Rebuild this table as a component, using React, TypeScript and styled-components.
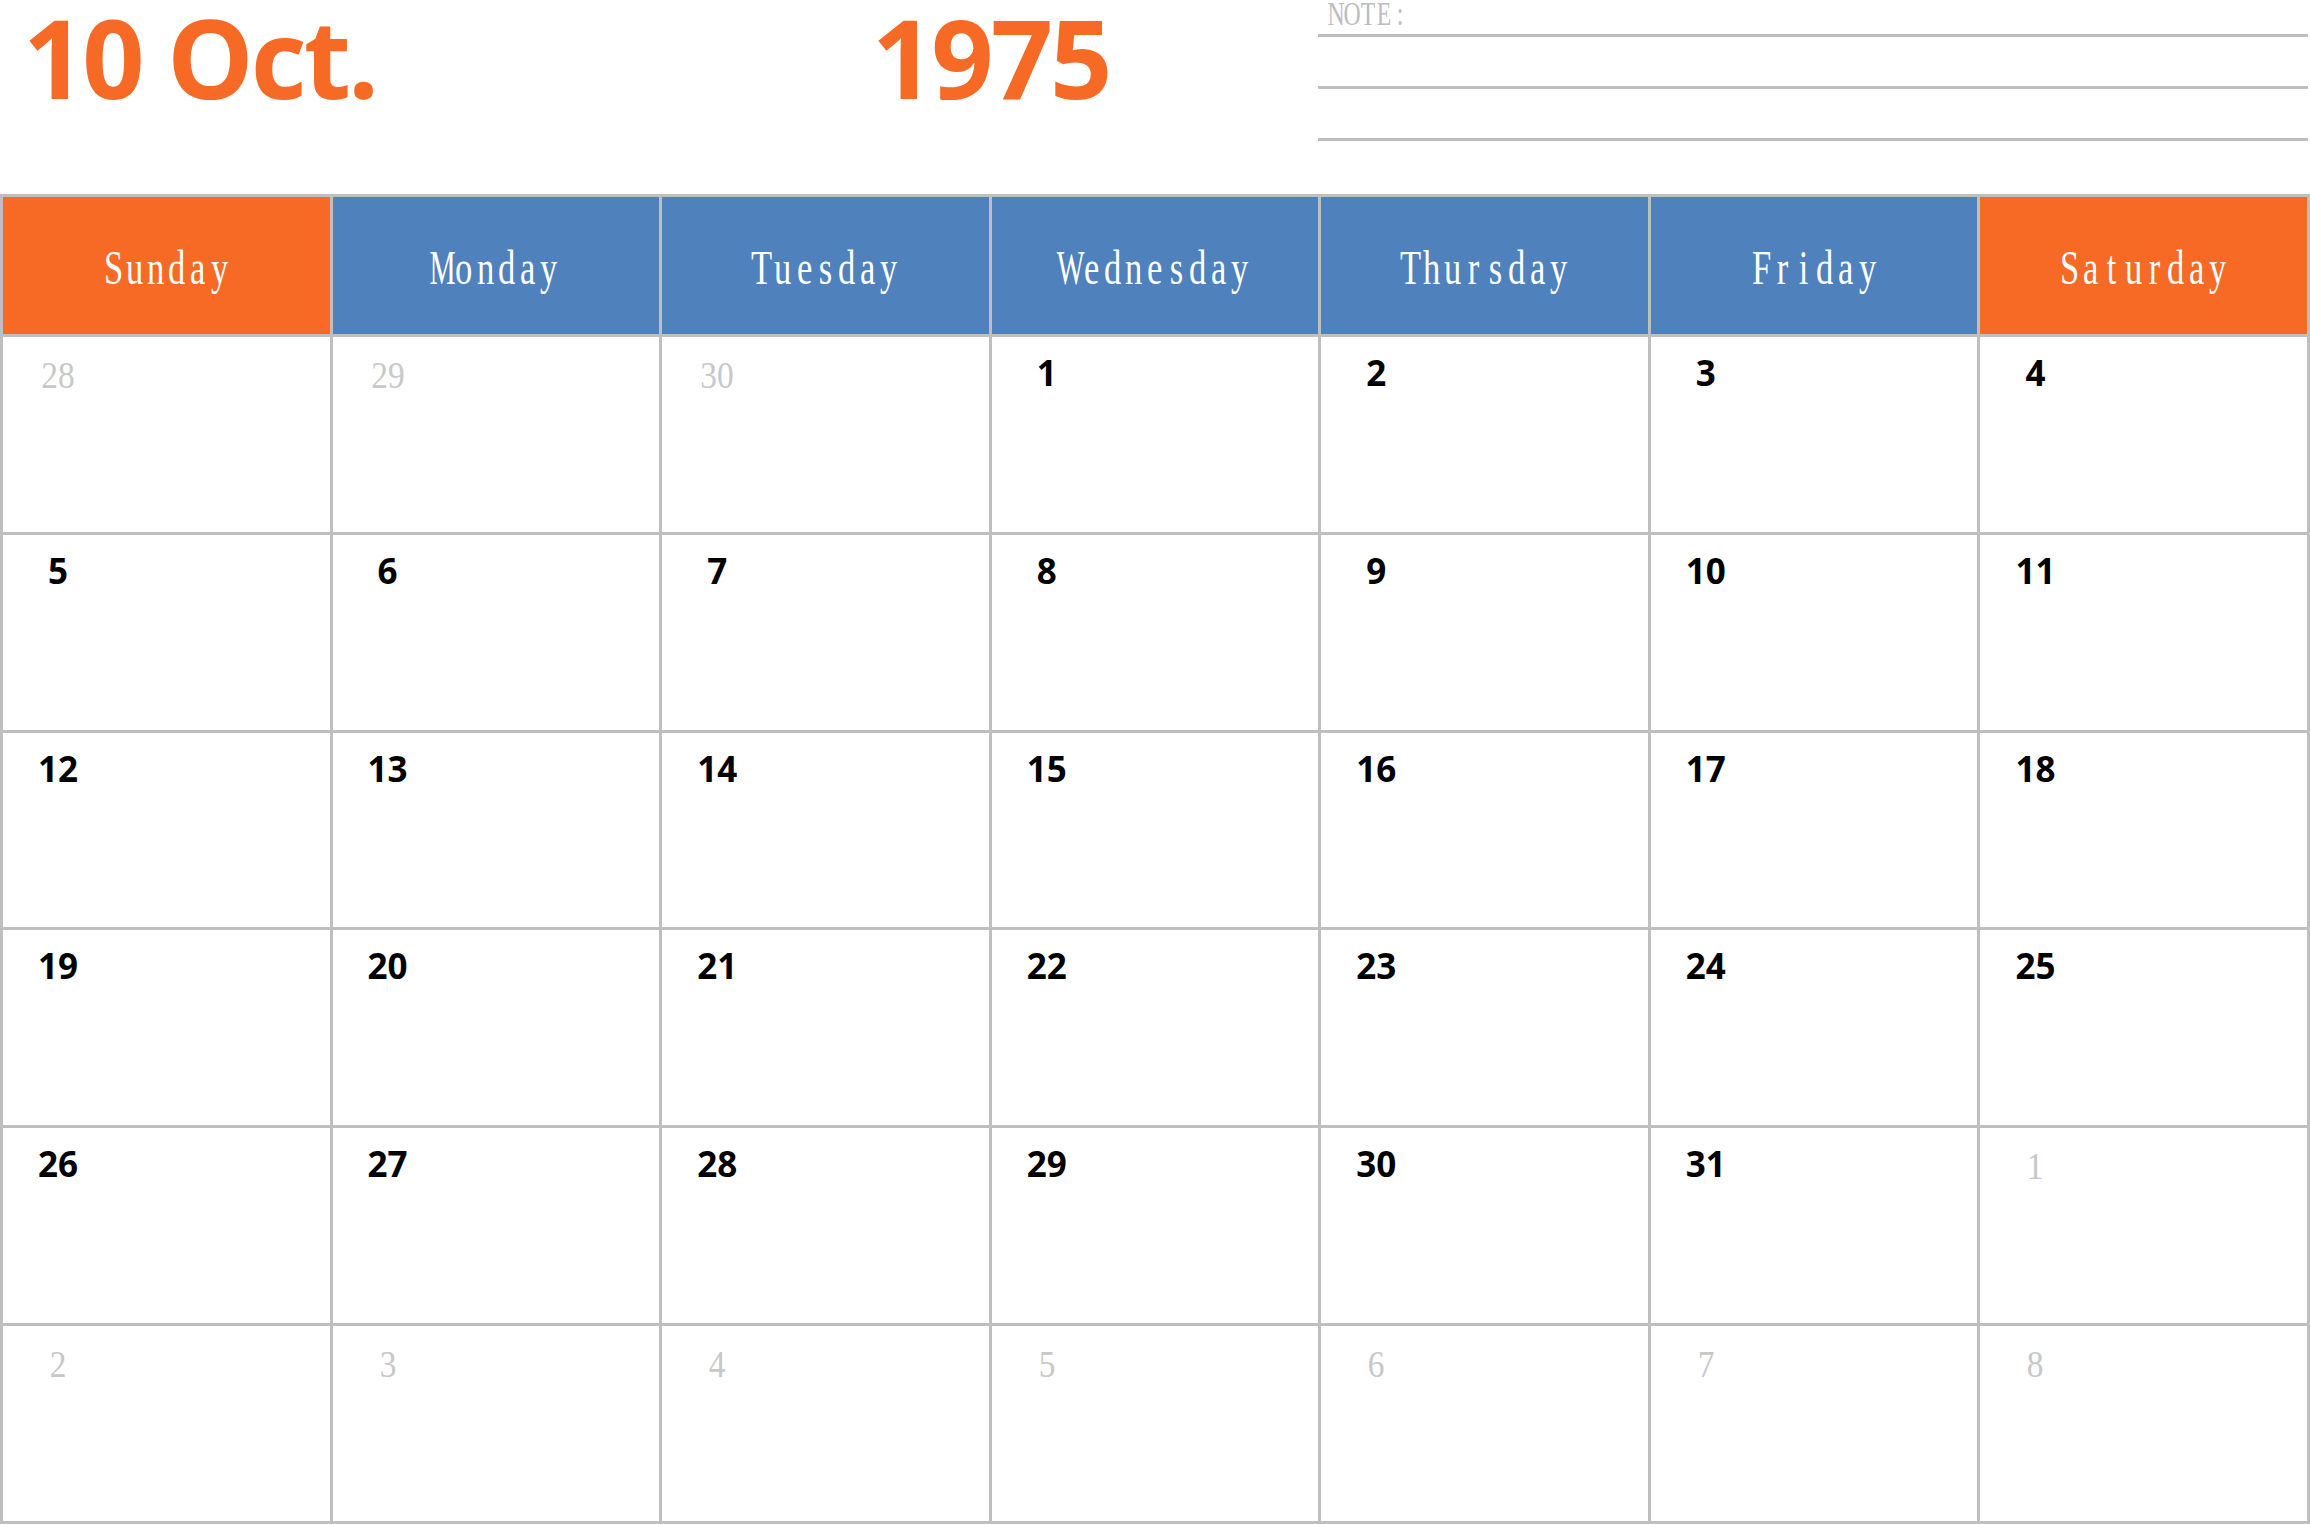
import styled, { createGlobalStyle } from 'styled-components'

const GlobalStyle = createGlobalStyle`
  html, body {
    margin: 0;
    padding: 0;
    background: #ffffff;
  }
`

const ORANGE = '#F76A25'
const BLUE = '#4F81BD'
const GRID = '#BFBFBF'

const Page = styled.div`
  width: 2310px;
  height: 1524px;
  display: flex;
  flex-direction: column;
  background: #ffffff;
  overflow: hidden;
`

const Top = styled.div`
  height: 194px;
  flex: none;
  display: grid;
  grid-template-columns: 1318px 1fr;
  align-items: start;
`

const TitleRow = styled.div`
  display: flex;
  margin-top: -17px;
  padding-left: 23px;
`

const TitleText = styled.div<{ $width?: number }>`
  width: ${p => (p.$width ? `${p.$width}px` : 'auto')};
  font-family: 'Open Sans', 'Noto Sans', sans-serif;
  font-weight: 700;
  font-size: 109px;
  letter-spacing: -3px;
  line-height: 1.362;
  color: ${ORANGE};
  white-space: nowrap;
`

const Notes = styled.div`
  display: flex;
  flex-direction: column;
  gap: 49px;
  padding-right: 2px;
`

const NoteLabel = styled.div`
  height: 34px;
  margin-bottom: -49px;
  padding-left: 10px;
  font-family: 'Liberation Serif', serif;
  font-size: 33px;
  line-height: 28px;
  color: #bdbdbd;
  white-space: nowrap;
`

const NoteLine = styled.div`
  height: 3px;
  background: ${GRID};
`

// SimSun-like monospaced serif: each glyph sits in a fixed cell
const Glyph = styled.span<{ $w: number; $sx: number }>`
  display: inline-flex;
  justify-content: center;
  width: ${p => p.$w}px;
  transform: scaleX(${p => p.$sx});
`

const MonoText = ({ text, w, sx }: { text: string; w: number; sx: number }) => (
  <>
    {text.split('').map((ch, i) => (
      <Glyph key={i} $w={w} $sx={ch === 'M' || ch === 'W' ? sx * 0.85 : sx}>
        {ch}
      </Glyph>
    ))}
  </>
)

const Table = styled.div`
  flex: 1;
  display: grid;
  grid-template-columns: repeat(7, 1fr);
  grid-template-rows: 137px repeat(6, 1fr);
  gap: 3px;
  padding: 3px;
  background: ${GRID};
`

const DayHead = styled.div<{ $weekend: boolean }>`
  display: flex;
  align-items: center;
  justify-content: center;
  padding-top: 5px;
  background: ${p => (p.$weekend ? ORANGE : BLUE)};
  color: #ffffff;
  font-family: 'Liberation Serif', serif;
  font-size: 48px;
  line-height: 1.2;
  white-space: nowrap;
`

const Cell = styled.div`
  background: #ffffff;
  padding: 18px 0 0 20px;
`

const DayNum = styled.div<{ $muted: boolean }>`
  width: 70px;
  text-align: center;
  line-height: 1;
  font-family: ${p => (p.$muted ? "'Liberation Serif', serif" : "'Open Sans', 'Noto Sans', sans-serif")};
  font-weight: ${p => (p.$muted ? 400 : 700)};
  font-size: ${p => (p.$muted ? '38px' : '35px')};
  color: ${p => (p.$muted ? '#c8c8c8' : '#000000')};
  padding-top: ${p => (p.$muted ? '1px' : '0')};
  transform: ${p => (p.$muted ? 'scaleX(0.88)' : 'none')};
`

const days = ['Sunday', 'Monday', 'Tuesday', 'Wednesday', 'Thursday', 'Friday', 'Saturday']

const cells: { n: number; muted: boolean }[] = [
  ...[28, 29, 30].map(n => ({ n, muted: true })),
  ...Array.from({ length: 31 }, (_, i) => ({ n: i + 1, muted: false })),
  ...Array.from({ length: 8 }, (_, i) => ({ n: i + 1, muted: true })),
]

export default function App() {
  return (
    <>
      <GlobalStyle />
      <Page>
        <Top>
          <TitleRow>
            <TitleText $width={849}>10 Oct.</TitleText>
            <TitleText>1975</TitleText>
          </TitleRow>
          <Notes>
            <NoteLabel>
              <MonoText text="NOTE:" w={16} sx={0.72} />
            </NoteLabel>
            <NoteLine />
            <NoteLine />
            <NoteLine />
          </Notes>
        </Top>
        <Table>
          {days.map((d, i) => (
            <DayHead key={d} $weekend={i === 0 || i === 6}>
              <MonoText text={d} w={21.2} sx={0.72} />
            </DayHead>
          ))}
          {cells.map((c, i) => (
            <Cell key={i}>
              <DayNum $muted={c.muted}>{c.n}</DayNum>
            </Cell>
          ))}
        </Table>
      </Page>
    </>
  )
}
